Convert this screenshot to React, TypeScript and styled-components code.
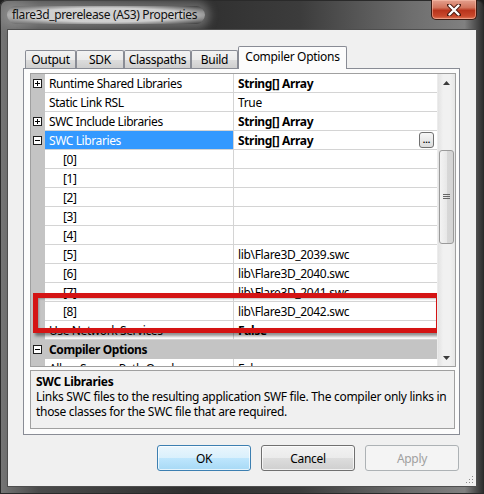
import React from 'react';
import styled, { createGlobalStyle } from 'styled-components';

const Global = createGlobalStyle`
  html, body { margin: 0; padding: 0; background: #1c1c1c; }
  body {
    width: 484px; height: 494px; overflow: hidden;
    font-family: "Noto Sans", "Open Sans", sans-serif;
    font-size: 12px; color: #000;
  }
  * { box-sizing: border-box; }
`;

const Window = styled.div`
  position: relative;
  width: 484px;
  height: 494px;
  display: flex;
  flex-direction: column;
  padding: 0 7px 7px;
  border-radius: 7px 7px 0 0;
  background:
    linear-gradient(to bottom, rgba(0,0,0,0) 0px, rgba(0,0,0,0) 30px, rgba(0,0,0,0) 100%),
    linear-gradient(to right, #767676 0%, #4a4a4a 8%, #2f2f2f 40%, #3c3c3c 62%, #6e6e6e 85%, #808080 96%, #2a2a2a 100%);
  box-shadow: inset 0 0 0 1px #2a2a2a;
`;

const TitleBar = styled.div`
  height: 29px;
  display: flex;
  align-items: flex-start;
  justify-content: space-between;
`;

const Title = styled.div`
  margin-top: 6px;
  padding: 1px 8px 2px 5px;
  font-size: 12px;
  line-height: 15px;
  letter-spacing: -0.35px;
  color: #111;
  border-radius: 12px;
  background: radial-gradient(ellipse at center, rgba(215,215,215,0.95) 55%, rgba(190,190,190,0.5) 80%, rgba(190,190,190,0) 100%);
  box-shadow: 0 0 9px 5px rgba(170,170,170,0.45);
`;

const CloseButton = styled.div`
  width: 46px;
  height: 20px;
  display: flex;
  align-items: center;
  justify-content: center;
  border: 1px solid #3a1a12;
  border-top: none;
  border-radius: 0 0 5px 5px;
  background: linear-gradient(to bottom, #e4a08e 0%, #d2745c 40%, #b8341c 55%, #c9482c 85%, #dc7a5c 100%);
  box-shadow: inset 0 0 0 1px rgba(255,200,180,0.5);
`;

const Client = styled.div`
  position: relative;
  flex: 1;
  display: flex;
  flex-direction: column;
  background: #f0f0f0;
  border: 1px solid #4e4e4e;
`;

const TabControl = styled.div`
  margin: 16px 16px 0 15px;
  display: flex;
  flex-direction: column;
`;

const TabStrip = styled.div`
  position: relative;
  z-index: 1;
  height: 23px;
  display: flex;
  align-items: flex-end;
  padding-left: 2px;
`;

const Tab = styled.div<{ $w: number; $active?: boolean }>`
  width: ${p => p.$w}px;
  height: ${p => (p.$active ? 23 : 18)}px;
  margin-bottom: ${p => (p.$active ? 0 : 1)}px;
  display: flex;
  align-items: center;
  justify-content: center;
  padding-bottom: ${p => (p.$active ? 3 : 0)}px;
  border: 1px solid #898c95;
  border-bottom: none;
  border-radius: 2px 2px 0 0;
  font-size: 12px;
  letter-spacing: -0.3px;
  background: ${p => (p.$active ? '#fcfcfc' : 'linear-gradient(to bottom, #f2f2f2 0%, #ebebeb 50%, #dddddd 51%, #cfcfcf 100%)')};
`;

const TabPanel = styled.div`
  margin-top: -1px;
  height: 367px;
  display: flex;
  flex-direction: column;
  gap: 3px;
  padding: 4px 3px 5px 6px;
  border: 1px solid #898c95;
  background: #fcfcfc;
`;

const PropGrid = styled.div`
  position: relative;
  height: 294px;
  display: flex;
  border: 1px solid #a0a0a0;
  background: #fff;
`;

const Rows = styled.div`
  position: relative;
  flex: 1;
  overflow: hidden;
  display: flex;
  flex-direction: column;
`;

const Row = styled.div<{ $category?: boolean }>`
  flex: none;
  height: 19px;
  display: grid;
  grid-template-columns: 14px 189px 1fr;
  background: ${p => (p.$category ? '#c4c4c4' : '#fff')};
`;

const Margin = styled.div`
  background: #c4c4c4;
  display: flex;
  align-items: center;
  padding-left: 2px;
`;

const NameCell = styled.div<{ $selected?: boolean; $indent?: boolean; $category?: boolean }>`
  display: flex;
  align-items: center;
  padding-left: ${p => (p.$indent ? 18 : 4)}px;
  border-right: ${p => (p.$category ? 'none' : '1px solid #d4d4d4')};
  border-bottom: 1px solid ${p => (p.$category ? '#c4c4c4' : '#d4d4d4')};
  background: ${p => (p.$selected ? '#3399ff' : 'transparent')};
  color: ${p => (p.$selected ? '#fff' : '#000')};
  font-weight: ${p => (p.$category ? 700 : 400)};
  white-space: nowrap;
  letter-spacing: -0.4px;
`;

const ValueCell = styled.div<{ $bold?: boolean; $category?: boolean }>`
  display: flex;
  align-items: center;
  justify-content: space-between;
  padding: 0 3px 0 4px;
  border-bottom: 1px solid ${p => (p.$category ? '#c4c4c4' : '#d4d4d4')};
  font-weight: ${p => (p.$bold ? 700 : 400)};
  white-space: nowrap;
  letter-spacing: -0.35px;
`;

const Ellipsis = styled.div`
  width: 15px;
  height: 16px;
  display: flex;
  align-items: flex-end;
  justify-content: center;
  padding-bottom: 4px;
  border: 1px solid #707070;
  border-radius: 3px;
  background: linear-gradient(to bottom, #f6f6f6, #dcdcdc);
  font-size: 9px;
  font-weight: 700;
  line-height: 6px;
  letter-spacing: 0;
`;

const ExpandBox = styled.div`
  width: 9px;
  height: 9px;
  border: 1px solid #1e1e1e;
  background: #fff;
  display: flex;
  align-items: center;
  justify-content: center;
`;

const ScrollBar = styled.div`
  width: 18px;
  display: flex;
  flex-direction: column;
  align-items: center;
  background: linear-gradient(to right, #e3e3e3, #f1f1f1 30%, #f1f1f1 70%, #e6e6e6);
  border-left: 1px solid #ececec;
`;

const Arrow = styled.div`
  height: 17px;
  width: 100%;
  display: flex;
  align-items: center;
  justify-content: center;
`;

const Track = styled.div`
  flex: 1;
  width: 100%;
  padding: 59px 1px 0 1px;
`;

const Thumb = styled.div`
  height: 94px;
  width: 15px;
  border: 1px solid #9a9a9a;
  border-radius: 3px;
  background: linear-gradient(to right, #f3f3f3, #e8e8e8 50%, #d8d8d8 51%, #d4d4d4);
  display: flex;
  align-items: center;
  justify-content: center;
`;

const HighlightBox = styled.div`
  position: absolute;
  left: 2px;
  top: 219px;
  width: 408px;
  height: 40px;
  border: 5px solid #d41414;
  box-shadow: 2px 3px 3px rgba(0,0,0,0.45), inset 1px 1px 2px rgba(0,0,0,0.25);
  pointer-events: none;
`;

const Description = styled.div`
  height: 59px;
  margin-right: 1px;
  padding: 3px 5px;
  border: 1px solid #a0a0a0;
  background: #f0f0f0;
  line-height: 15px;
  letter-spacing: -0.3px;
  white-space: nowrap;
`;

const DescTitle = styled.div`
  font-weight: 700;
`;

const ButtonRow = styled.div`
  margin: 10px 17px 0 0;
  display: flex;
  justify-content: flex-end;
  gap: 10px;
`;

const Button = styled.div<{ $variant?: 'default' | 'disabled' }>`
  width: 94px;
  height: 26px;
  display: flex;
  align-items: center;
  justify-content: center;
  border-radius: 3px;
  letter-spacing: -0.3px;
  border: 1px solid ${p => (p.$variant === 'default' ? '#3c7fb1' : p.$variant === 'disabled' ? '#adb2b5' : '#707070')};
  color: ${p => (p.$variant === 'disabled' ? '#a0a0a0' : '#000')};
  background: ${p =>
    p.$variant === 'default'
      ? 'linear-gradient(to bottom, #eaf6fd 0%, #d9f0fc 50%, #bee6fd 51%, #a7d9f5 100%)'
      : p.$variant === 'disabled'
      ? '#f4f4f4'
      : 'linear-gradient(to bottom, #f2f2f2 0%, #ebebeb 50%, #dddddd 51%, #cfcfcf 100%)'};
  box-shadow: ${p => (p.$variant === 'disabled' ? 'none' : 'inset 0 0 0 1px rgba(255,255,255,0.7)')};
`;

const Grip = styled.svg`
  position: absolute;
  right: 2px;
  bottom: 2px;
`;

const Plus = ({ minus }: { minus?: boolean }) => (
  <ExpandBox>
    <svg width="7" height="7" viewBox="0 0 7 7">
      <rect x="1" y="3" width="5" height="1" fill="#000" />
      {!minus && <rect x="3" y="1" width="1" height="5" fill="#000" />}
    </svg>
  </ExpandBox>
);

type RowData = {
  name: string;
  value?: string;
  bold?: boolean;
  expand?: 'plus' | 'minus';
  indent?: boolean;
  selected?: boolean;
  category?: boolean;
  button?: boolean;
};

const rows: RowData[] = [
  { name: 'Runtime Shared Libraries', value: 'String[] Array', bold: true, expand: 'plus' },
  { name: 'Static Link RSL', value: 'True' },
  { name: 'SWC Include Libraries', value: 'String[] Array', bold: true, expand: 'plus' },
  { name: 'SWC Libraries', value: 'String[] Array', bold: true, expand: 'minus', selected: true, button: true },
  { name: '[0]', indent: true },
  { name: '[1]', indent: true },
  { name: '[2]', indent: true },
  { name: '[3]', indent: true },
  { name: '[4]', indent: true },
  { name: '[5]', value: 'lib\\Flare3D_2039.swc', indent: true },
  { name: '[6]', value: 'lib\\Flare3D_2040.swc', indent: true },
  { name: '[7]', value: 'lib\\Flare3D_2041.swc', indent: true },
  { name: '[8]', value: 'lib\\Flare3D_2042.swc', indent: true },
  { name: 'Use Network Services', value: 'False', bold: true },
  { name: 'Compiler Options', expand: 'minus', category: true },
  { name: 'Allow Source Path Overlap', value: 'False' },
];

export default function App() {
  return (
    <>
      <Global />
      <Window>
        <TitleBar>
          <Title>flare3d_prerelease (AS3) Properties</Title>
          <CloseButton>
            <svg width="14" height="12" viewBox="0 0 14 12">
              <path d="M2 1 L12 11 M12 1 L2 11" stroke="#4a1a10" strokeWidth="4.2" strokeLinecap="round" />
              <path d="M2.5 1.5 L11.5 10.5 M11.5 1.5 L2.5 10.5" stroke="#fff" strokeWidth="2.4" strokeLinecap="round" />
            </svg>
          </CloseButton>
        </TitleBar>
        <Client>
          <TabControl>
            <TabStrip>
              <Tab $w={51}>Output</Tab>
              <Tab $w={48}>SDK</Tab>
              <Tab $w={67}>Classpaths</Tab>
              <Tab $w={47}>Build</Tab>
              <Tab $w={109} $active>Compiler Options</Tab>
            </TabStrip>
            <TabPanel>
              <PropGrid>
                <Rows>
                  {rows.map((r, i) => (
                    <Row key={i} $category={r.category}>
                      <Margin>{r.expand && <Plus minus={r.expand === 'minus'} />}</Margin>
                      <NameCell $selected={r.selected} $indent={r.indent} $category={r.category}>
                        {r.name}
                      </NameCell>
                      <ValueCell $bold={r.bold} $category={r.category}>
                        <span>{r.value ?? ''}</span>
                        {r.button && <Ellipsis>...</Ellipsis>}
                      </ValueCell>
                    </Row>
                  ))}
                  <HighlightBox />
                </Rows>
                <ScrollBar>
                  <Arrow>
                    <svg width="7" height="4" viewBox="0 0 7 4"><path d="M0 4 L3.5 0 L7 4 Z" fill="#3c3c3c" /></svg>
                  </Arrow>
                  <Track>
                    <Thumb>
                      <svg width="7" height="6" viewBox="0 0 7 6">
                        <rect x="0" y="0" width="7" height="1" fill="#666" />
                        <rect x="0" y="2" width="7" height="1" fill="#666" />
                        <rect x="0" y="4" width="7" height="1" fill="#666" />
                      </svg>
                    </Thumb>
                  </Track>
                  <Arrow>
                    <svg width="7" height="4" viewBox="0 0 7 4"><path d="M0 0 L3.5 4 L7 0 Z" fill="#3c3c3c" /></svg>
                  </Arrow>
                </ScrollBar>
              </PropGrid>
              <Description>
                <DescTitle>SWC Libraries</DescTitle>
                <div>Links SWC files to the resulting application SWF file. The compiler only links in</div>
                <div>those classes for the SWC file that are required.</div>
              </Description>
            </TabPanel>
          </TabControl>
          <ButtonRow>
            <Button $variant="default">OK</Button>
            <Button>Cancel</Button>
            <Button $variant="disabled">Apply</Button>
          </ButtonRow>
          <Grip width="10" height="10" viewBox="0 0 10 10">
            {[[8, 2], [8, 5], [5, 5], [8, 8], [5, 8], [2, 8]].map(([x, y], i) => (
              <rect key={i} x={x} y={y} width="1" height="1" fill="#8a8a8a" />
            ))}
          </Grip>
        </Client>
      </Window>
    </>
  );
}
